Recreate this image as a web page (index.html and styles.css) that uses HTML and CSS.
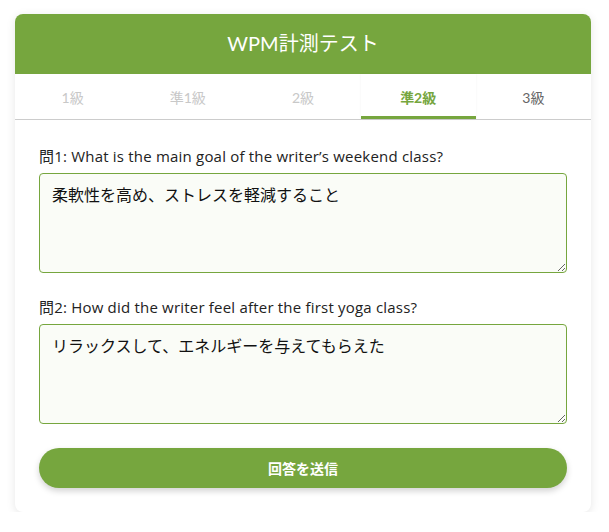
FILE: index.html
```html
<!DOCTYPE html>
<html lang="ja">
<head>
    <meta charset="UTF-8">
    <meta name="viewport" content="width=device-width, initial-scale=1.0">
    <link rel="stylesheet" href="styles.css">
    <title>WPM計測テスト</title>
</head>
<body>
    <div class="contenedor">
        <header class="cabecera">
            <h1>WPM計測テスト</h1>
        </header>
        <nav class="pestanas">
            <button class="pestana">1級</button>
            <button class="pestana">準1級</button>
            <button class="pestana">2級</button>
            <button class="pestana activa">準2級</button>
            <button class="pestana siguiente">3級</button>
        </nav>
        <form class="preguntas">
            <div class="pregunta">
                <label for="q1">問1: What is the main goal of the writer’s weekend class?</label>
                <textarea id="q1">柔軟性を高め、ストレスを軽減すること</textarea>
            </div>
            <div class="pregunta">
                <label for="q2">問2: How did the writer feel after the first yoga class?</label>
                <textarea id="q2">リラックスして、エネルギーを与えてもらえた</textarea>
            </div>
            <button type="button" class="enviar">回答を送信</button>
        </form>
    </div>
</body>
</html>
```

FILE: styles.css
```css
* {
    margin: 0;
    padding: 0;
    box-sizing: border-box;
}
body {
    background-color: #fff;
    font-family: "Open Sans", "Noto Sans CJK JP", sans-serif;
    color: #333;
}
.contenedor {
    width: 576px;
    margin: 14px 0 0 15px;
    background-color: #fff;
    border-radius: 8px;
    overflow: hidden;
    box-shadow: 0 2px 10px rgba(0, 0, 0, 0.1);
}
.cabecera {
    height: 60px;
    background-color: #76a63e;
    display: flex;
    align-items: center;
    justify-content: center;
}
.cabecera h1 {
    color: #fff;
    font-family: Lato, "Noto Sans CJK JP", sans-serif;
    font-size: 20px;
    font-weight: 400;
    margin-bottom: 3px;
}
.pestanas {
    display: grid;
    grid-template-columns: repeat(5, 1fr);
    height: 46px;
    border-bottom: 1px solid #ccc;
}
.pestana {
    background: none;
    border: none;
    border-bottom: 3px solid transparent;
    font-family: Lato, "Noto Sans CJK JP", sans-serif;
    font-size: 14px;
    color: #c8c8c8;
    padding-top: 3px;
}
.pestana.activa {
    color: #76a63e;
    font-weight: 700;
    border-bottom-color: #76a63e;
    box-shadow: 0 0 2px rgba(0, 0, 0, 0.06);
}
.pestana.siguiente {color: #666;}
.preguntas {
    padding: 26px 24px 24px;
    display: flex;
    flex-direction: column;
}
.pregunta {
    display: flex;
    flex-direction: column;
    margin-bottom: 24px;
}
.pregunta label {
    font-size: 15px;
    letter-spacing: 0.2px;
    line-height: 20px;
    margin-bottom: 7px;
    color: #222;
}
.pregunta textarea {
    height: 100px;
    padding: 9px 12px;
    font-family: "Noto Sans CJK JP", sans-serif;
    font-size: 16px;
    line-height: 22px;
    color: #111;
    background-color: #fafcf7;
    border: 1px solid #76a63e;
    border-radius: 4px;
}
.enviar {
    height: 40px;
    border: none;
    border-radius: 20px;
    background-color: #76a63e;
    color: #fff;
    font-family: "Noto Sans CJK JP", sans-serif;
    font-size: 14px;
    font-weight: 700;
    box-shadow: 0 3px 6px rgba(0, 0, 0, 0.18);
}
```
